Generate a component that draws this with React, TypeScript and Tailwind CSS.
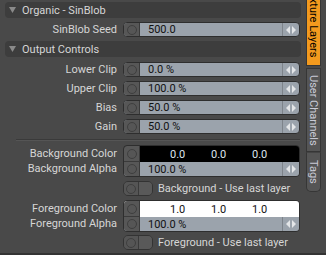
import React from 'react';

const font = { fontFamily: 'Roboto, "Liberation Sans", sans-serif' };

const Header: React.FC<{ title: string; className?: string }> = ({ title, className }) => (
  <div className={`ml-[5px] w-[296px] h-[16px] rounded-[4px] bg-[#3d3d3d] flex items-center ${className ?? ''}`}>
    <svg width="7" height="6" viewBox="0 0 7 6" className="ml-[4px] mr-[6px]">
      <polygon points="0,0 7,0 3.5,6" fill="#8a8a8a" />
    </svg>
    <span className="text-[11px] leading-none text-[#d6d6d6]">{title}</span>
  </div>
);

const Knob: React.FC<{ className?: string }> = ({ className }) => (
  <div className={`w-[16px] h-full bg-[#575757] flex items-center justify-center border-r border-[#3a3a3a] ${className ?? ''}`}>
    <div className="w-[10px] h-[10px] rounded-full border border-[#3f3f3f] bg-[#565656]" />
  </div>
);

const Arrows: React.FC = () => (
  <div className="w-[17px] h-full border-l border-[#7d838a] flex items-center justify-center">
    <svg width="10" height="8" viewBox="0 0 10 8">
      <polygon points="0,4 4,0 4,8" fill="#e4e6e8" />
      <polygon points="10,4 6,0 6,8" fill="#e4e6e8" />
    </svg>
  </div>
);

const Label: React.FC<{ text: string }> = ({ text }) => (
  <div className="w-[118px] pr-[1px] text-right text-[11px] leading-none text-[#d6d6d6]">{text}</div>
);

const NumRow: React.FC<{ label: string; value: string; className?: string }> = ({ label, value, className }) => (
  <div className={`flex items-center h-[15px] ${className ?? ''}`}>
    <Label text={label} />
    <div className="ml-[5px] w-[177px] h-[15px] flex rounded-[4px] overflow-hidden border border-[#2e2e2e] bg-[#9ba3ac]">
      <Knob />
      <div className="flex-1 pl-[8px] flex items-center text-[11px] leading-none text-[#111]">{value}</div>
      <Arrows />
    </div>
  </div>
);

const ColorBlock: React.FC<{ prefix: string; rgb: string[]; alpha: string; dark: boolean; className?: string }> = ({
  prefix,
  rgb,
  alpha,
  dark,
  className,
}) => (
  <div className={`flex ${className ?? ''}`}>
    <div className="w-[118px] flex flex-col">
      <div className="h-[16px] flex items-center justify-end">
        <Label text={`${prefix} Color`} />
      </div>
      <div className="h-[15px] flex items-center justify-end">
        <Label text={`${prefix} Alpha`} />
      </div>
    </div>
    <div className="ml-[5px] w-[177px] flex flex-col rounded-[4px] overflow-hidden border border-[#2e2e2e]">
      <div className={`h-[16px] flex ${dark ? 'bg-black' : 'bg-white'}`}>
        <Knob className="border-b border-b-[#3a3a3a]" />
        <div className="flex-1 pl-[30px] flex items-center text-[11px] leading-none">
          {rgb.map((v, i) => (
            <span key={i} className={`w-[41px] ${dark ? 'text-[#dfe6ee]' : 'text-[#111]'}`}>
              {v}
            </span>
          ))}
        </div>
      </div>
      <div className="h-[14px] flex bg-[#9ba3ac]">
        <Knob />
        <div className="flex-1 pl-[8px] flex items-center text-[11px] leading-none text-[#111]">{alpha}</div>
        <Arrows />
      </div>
    </div>
  </div>
);

const Toggle: React.FC<{ text: string; className?: string }> = ({ text, className }) => (
  <div className={`flex items-center h-[15px] ${className ?? ''}`}>
    <div className="ml-[123px] w-[30px] h-[15px] flex rounded-[5px] overflow-hidden border border-[#333]">
      <div className="w-[15px] h-full bg-[#555] flex items-center justify-center border-r border-[#3a3a3a]">
        <div className="w-[10px] h-[10px] rounded-full border border-[#3f3f3f]" />
      </div>
      <div className="flex-1 bg-[#595959]" />
    </div>
    <span className="ml-[5px] text-[11px] leading-none text-[#d6d6d6]">{text}</span>
  </div>
);

const Tab: React.FC<{ text: string; active?: boolean; className?: string }> = ({ text, active, className }) => (
  <div
    className={`w-[15px] flex items-center justify-center border border-[#363636] ${
      active ? 'bg-[#f39a1e] text-black' : 'bg-[#555] text-[#c9cad6]'
    } ${className ?? ''}`}
  >
    <span className="text-[11px] leading-[13px] whitespace-nowrap [writing-mode:vertical-rl]">{text}</span>
  </div>
);

export default function App() {
  return (
    <div className="w-[326px] h-[255px] bg-[#494949] flex overflow-hidden border-b-2 border-[#333]" style={font}>
      <div className="w-[306px] flex flex-col pt-[2px]">
        <Header title="Organic - SinBlob" />
        <NumRow label="SinBlob Seed" value="500.0" className="mt-[4px]" />
        <Header title="Output Controls" className="mt-[4px] h-[15px]" />
        <NumRow label="Lower Clip" value="0.0 %" className="mt-[5px]" />
        <NumRow label="Upper Clip" value="100.0 %" className="mt-[4px]" />
        <NumRow label="Bias" value="50.0 %" className="mt-[4px]" />
        <NumRow label="Gain" value="50.0 %" className="mt-[4px]" />
        <div className="mt-[5px] ml-[16px] w-[284px] h-[2px] border-t border-[#3a3a3a] border-b border-b-[#555]" />
        <ColorBlock prefix="Background" rgb={['0.0', '0.0', '0.0']} alpha="100.0 %" dark className="mt-[4px]" />
        <Toggle text="Background - Use last layer" className="mt-[4px]" />
        <ColorBlock prefix="Foreground" rgb={['1.0', '1.0', '1.0']} alpha="100.0 %" dark={false} className="mt-[4px]" />
        <Toggle text="Foreground - Use last layer" className="mt-[3px]" />
      </div>
      <div className="w-[15px] flex flex-col -mt-[16px]">
        <Tab text="Texture Layers" active className="h-[82px] pb-[6px]" />
        <Tab text="User Channels" className="mt-[2px] h-[84px]" />
        <Tab text="Tags" className="h-[40px] rounded-b-[5px] border-t-[#444]" />
      </div>
    </div>
  );
}
